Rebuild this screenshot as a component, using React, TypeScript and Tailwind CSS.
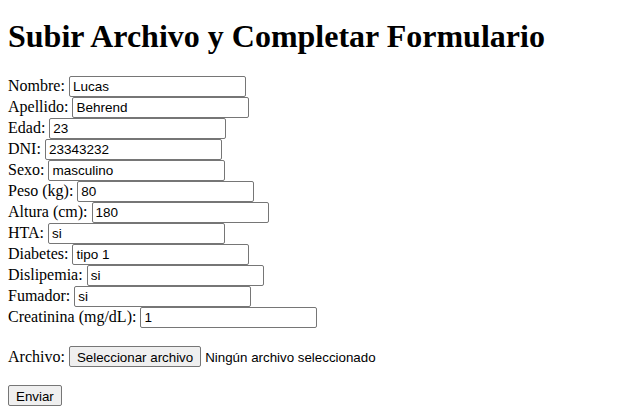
import React from "react";

const fields = [
  { label: "Nombre:", value: "Lucas" },
  { label: "Apellido:", value: "Behrend" },
  { label: "Edad:", value: "23" },
  { label: "DNI:", value: "23343232" },
  { label: "Sexo:", value: "masculino" },
  { label: "Peso (kg):", value: "80" },
  { label: "Altura (cm):", value: "180" },
  { label: "HTA:", value: "si" },
  { label: "Diabetes:", value: "tipo 1" },
  { label: "Dislipemia:", value: "si" },
  { label: "Fumador:", value: "si" },
  { label: "Creatinina (mg/dL):", value: "1" },
];

const serif = "font-['Liberation_Serif','Times_New_Roman',serif]";
const sans = "font-['Liberation_Sans',Arial,sans-serif]";

export default function App() {
  return (
    <div className={`min-h-[419px] bg-white px-[8px] pb-[8px] text-black ${serif}`}>
      <h1 className="pt-[18px] mb-[22px] text-[32px] font-bold leading-[36px]">
        Subir Archivo y Completar Formulario
      </h1>

      <form className="flex flex-col" onSubmit={(e) => e.preventDefault()}>
        {fields.map((f) => (
          <div key={f.label} className="flex h-[21px] items-baseline gap-[4px]">
            <label className="text-[16px] leading-[18px] whitespace-nowrap">{f.label}</label>
            <input
              type="text"
              defaultValue={f.value}
              className={`box-border h-[21px] w-[177px] rounded-[2px] border border-[#767676] bg-white px-[3px] py-[1px] text-[13.5px] text-black outline-none ${sans}`}
            />
          </div>
        ))}

        <div className="mt-[18px] flex h-[21px] items-baseline gap-[4px]">
          <span className="text-[16px] leading-[18px]">Archivo:</span>
          <button
            type="button"
            className={`box-border h-[21px] rounded-[2px] border border-[#767676] bg-[#efefef] px-[7px] py-[1px] text-[13.333px] whitespace-nowrap ${sans}`}
          >
            Seleccionar archivo
          </button>
          <span className={`text-[13.333px] whitespace-nowrap ${sans}`}>Ningún archivo seleccionado</span>
        </div>

        <div className="mt-[18px] flex h-[21px]">
          <button
            type="submit"
            className={`box-border h-[21px] rounded-[2px] border border-[#767676] bg-[#efefef] px-[7px] py-[1px] text-[13.333px] ${sans}`}
          >
            Enviar
          </button>
        </div>
      </form>
    </div>
  );
}
